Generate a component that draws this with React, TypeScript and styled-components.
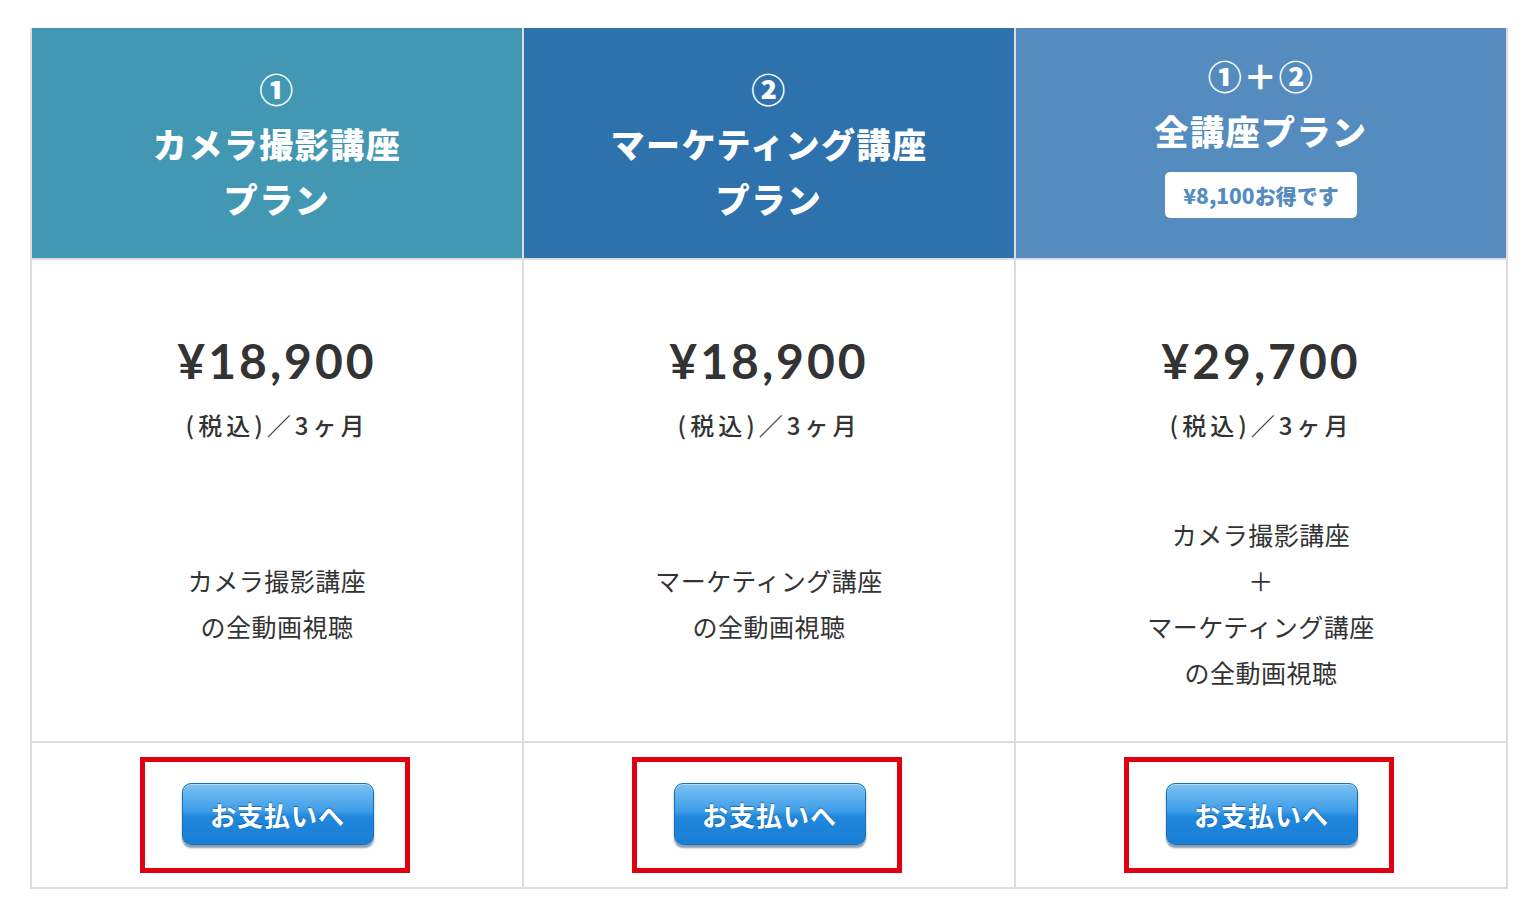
import React from "react";
import styled, { createGlobalStyle } from "styled-components";

const GlobalStyle = createGlobalStyle`
  html, body { margin: 0; padding: 0; background: #ffffff; }
  body { font-family: "Noto Sans CJK JP", "Noto Sans", sans-serif; color: #333; }
`;

const Page = styled.div`
  padding: 28px 0 0 30px;
`;

const Table = styled.div`
  width: 1478px;
  display: grid;
  grid-template-columns: repeat(3, 1fr);
  grid-template-rows: 230px 481px 144px;
  gap: 2px;
  padding: 0 2px 2px 2px;
  box-sizing: border-box;
  background: #dddddd;
`;

const Head = styled.div<{ $bg: string }>`
  background: ${(p) => p.$bg};
  color: #fff;
  display: flex;
  flex-direction: column;
  align-items: center;
  justify-content: center;
  font-family: "Noto Sans CJK JP", sans-serif;
  font-weight: 900;
  font-size: 34px;
  line-height: 55px;
  letter-spacing: 1.5px;
`;

const HeadLine = styled.div``;

const Badge = styled.div<{ $fg: string }>`
  margin-top: 14px;
  margin-bottom: 20px;
  background: #fff;
  color: ${(p) => p.$fg};
  border-radius: 5px;
  font-size: 21px;
  line-height: 46px;
  font-weight: 900;
  letter-spacing: 0;
  padding: 0 18px;
`;

const Body = styled.div`
  background: #fff;
  display: flex;
  flex-direction: column;
  align-items: center;
  padding-top: 70px;
`;

const Price = styled.div`
  font-family: "Lato", sans-serif;
  font-weight: 700;
  font-size: 48px;
  line-height: 62px;
  letter-spacing: 3px;
  color: #333;
`;

const Tax = styled.div`
  margin-top: 13px;
  font-size: 24px;
  line-height: 40px;
  letter-spacing: 4px;
  font-weight: 500;
  color: #333;
`;

const Desc = styled.div`
  flex: 1;
  display: flex;
  flex-direction: column;
  justify-content: center;
  align-items: center;
  font-size: 25px;
  line-height: 46px;
  letter-spacing: 0.5px;
  color: #333;
  padding-top: 20px;
`;

const Foot = styled.div`
  background: #fff;
  display: flex;
  justify-content: center;
  align-items: center;
`;

const Highlight = styled.div`
  width: 260px;
  height: 106px;
  border: 5px solid #e00010;
  display: flex;
  align-items: center;
  justify-content: center;
  margin-left: -5px;
`;

const PayButton = styled.button`
  width: 192px;
  height: 62px;
  margin-left: 6px;
  margin-top: -2px;
  border-radius: 9px;
  border: 1px solid #1d6fb3;
  background: linear-gradient(to bottom, #7cc2f2 0%, #3e9de8 45%, #1f87dc 55%, #1a7fd4 100%);
  box-shadow: 0 3px 2px rgba(0, 40, 90, 0.45), inset 0 1px 0 rgba(255,255,255,0.4);
  color: #fff;
  font-family: "Noto Sans CJK JP", sans-serif;
  font-size: 26px;
  font-weight: 700;
  letter-spacing: 1px;
  text-shadow: 0 -1px 1px rgba(0, 50, 110, 0.5);
  cursor: pointer;
  padding: 0;
`;

type Plan = {
  bg: string;
  head: string[];
  badge?: string;
  price: string;
  desc: string[];
};

const plans: Plan[] = [
  {
    bg: "#4297b2",
    head: ["①", "カメラ撮影講座", "プラン"],
    price: "¥18,900",
    desc: ["カメラ撮影講座", "の全動画視聴"],
  },
  {
    bg: "#2e72ad",
    head: ["②", "マーケティング講座", "プラン"],
    price: "¥18,900",
    desc: ["マーケティング講座", "の全動画視聴"],
  },
  {
    bg: "#548cbf",
    head: ["①＋②", "全講座プラン"],
    badge: "¥8,100お得です",
    price: "¥29,700",
    desc: ["カメラ撮影講座", "＋", "マーケティング講座", "の全動画視聴"],
  },
];

export default function App() {
  return (
    <>
      <GlobalStyle />
      <Page>
        <Table>
          {plans.map((p, i) => (
            <Head key={"h" + i} $bg={p.bg}>
              {p.head.map((l, j) => (
                <HeadLine key={j}>{l}</HeadLine>
              ))}
              {p.badge && <Badge $fg={p.bg}>{p.badge}</Badge>}
            </Head>
          ))}
          {plans.map((p, i) => (
            <Body key={"b" + i}>
              <Price>{p.price}</Price>
              <Tax>(税込)／3ヶ月</Tax>
              <Desc>
                {p.desc.map((d, j) => (
                  <div key={j}>{d}</div>
                ))}
              </Desc>
            </Body>
          ))}
          {plans.map((p, i) => (
            <Foot key={"f" + i}>
              <Highlight>
                <PayButton>お支払いへ</PayButton>
              </Highlight>
            </Foot>
          ))}
        </Table>
      </Page>
    </>
  );
}
